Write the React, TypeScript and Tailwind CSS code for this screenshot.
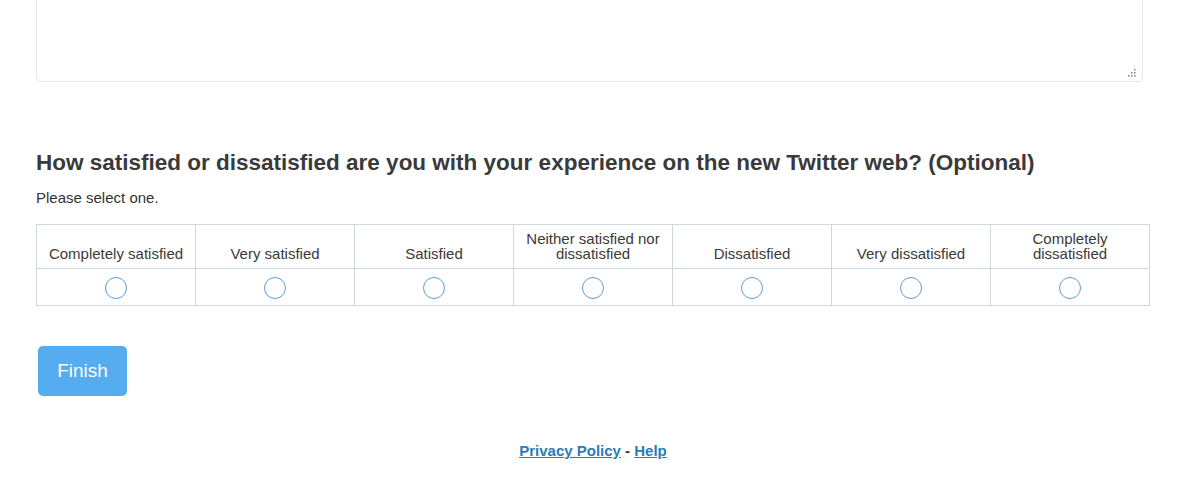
const options = [
  'Completely satisfied',
  'Very satisfied',
  'Satisfied',
  'Neither satisfied nor dissatisfied',
  'Dissatisfied',
  'Very dissatisfied',
  'Completely dissatisfied',
]

function ResizeGrip() {
  const dots = [
    [8, 1],
    [5, 4],
    [8, 4],
    [2, 7],
    [5, 7],
    [8, 7],
  ]
  return (
    <svg width="10" height="9" viewBox="0 0 10 9" className="absolute right-[6px] bottom-[4px]">
      {dots.map(([x, y]) => (
        <rect key={`${x}-${y}`} x={x - 1} y={y - 1} width="1.6" height="1.6" fill="#8a8f96" />
      ))}
    </svg>
  )
}

export default function App() {
  return (
    <div className="min-h-screen bg-white font-['Liberation_Sans',Arial,sans-serif] text-[#333]">
      <div className="pl-[36px] pr-[50px]">
        <div className="relative -mt-[60px] w-[1107px]">
          <textarea
            className="block h-[142px] w-full resize-none rounded-[5px] border border-[#e3e6ea] bg-white"
            aria-label="Comments"
          />
          <ResizeGrip />
        </div>

        <h2 className="mt-[68px] text-[22.5px] leading-[26px] font-bold text-[#3a3a3a]">
          How satisfied or dissatisfied are you with your experience on the new Twitter web? (Optional)
        </h2>
        <p className="mt-[13px] text-[15px] leading-[18px] text-[#333]">Please select one.</p>

        <table className="mt-[17px] w-[1114px] table-fixed border-collapse text-[15px] leading-[15px] text-[#3a3a3a]">
          <thead>
            <tr className="h-[44px]">
              {options.map((o) => (
                <th
                  key={o}
                  className="border border-[#ccd8e2] px-[10px] pb-[7px] align-bottom font-normal"
                >
                  {o}
                </th>
              ))}
            </tr>
          </thead>
          <tbody>
            <tr className="h-[37px]">
              {options.map((o) => (
                <td key={o} className="border border-[#ccd8e2] text-center align-middle">
                  <span className="inline-block h-[22px] w-[22px] translate-y-[1px] rounded-full border-[1.5px] border-[#5d9fd8] align-middle" />
                </td>
              ))}
            </tr>
          </tbody>
        </table>

        <button className="mt-[40px] ml-[2px] h-[50px] w-[89px] rounded-[5px] bg-[#55acee] text-[19px] text-white">
          Finish
        </button>

        <div className="mt-[44px] text-center text-[15px] font-bold text-[#333]">
          <a href="#" className="text-[#2b7bb9] underline">Privacy Policy</a>
          {' - '}
          <a href="#" className="text-[#2b7bb9] underline">Help</a>
        </div>
      </div>
    </div>
  )
}
